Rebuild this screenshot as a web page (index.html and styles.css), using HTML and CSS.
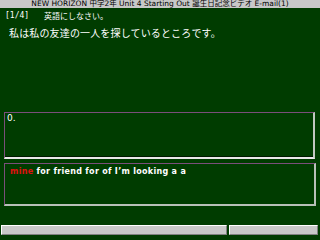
FILE: index.html
```html
<!DOCTYPE html>
<html lang="ja">
<head>
<meta charset="utf-8">
<link rel="stylesheet" href="styles.css">
</head>
<body>
<div class="screen">
  <div class="title">NEW HORIZON 中学2年 Unit 4 Starting Out 誕生日記念ビデオ E-mail(1)</div>
  <div class="prompt"><span class="count">[1/4]</span><span class="instr">英語にしなさい。</span></div>
  <div class="sentence">私は私の友達の一人を探しているところです。</div>
  <div class="answer">0.</div>
  <div class="words"><span class="hl">mine</span> for friend for of I’m looking a a</div>
  <div class="status">
    <div class="panel p1"></div>
    <div class="panel p2"></div>
  </div>
</div>
</body>
</html>
```
FILE: styles.css
```css
html, body {
  margin: 0;
  padding: 0;
}
body {
  width: 320px;
  height: 240px;
  background: #003c00;
  overflow: hidden;
  font-family: "Noto Sans CJK JP", "DejaVu Sans", sans-serif;
  color: #ffffff;
}
.screen {
  display: flex;
  flex-direction: column;
  height: 240px;
}
.title {
  height: 8px;
  line-height: 8px;
  background: #c8c8c8;
  color: #000;
  font-size: 7.5px;
  text-align: center;
  white-space: nowrap;
  overflow: hidden;
  font-family: "DejaVu Sans", "Noto Sans CJK JP", sans-serif;
}
.prompt {
  display: flex;
  margin-top: 3px;
  height: 10px;
  line-height: 10px;
  font-size: 8px;
  padding-left: 5px;
}
.count {
  width: 39px;
  font-family: "DejaVu Sans Mono", monospace;
}
.instr {
  font-size: 8px;
}
.sentence {
  margin-top: 6px;
  padding-left: 9px;
  height: 12px;
  line-height: 12px;
  font-size: 10px;
  letter-spacing: 0.15px;
}
.answer {
  margin: 73px 0 0 4px;
  width: 306px;
  height: 44px;
  border-top: 1px solid #7a4e7a;
  border-left: 1px solid #7a4e7a;
  border-right: 2px solid #c0c8c0;
  border-bottom: 2px solid #e8e8e8;
  box-shadow: inset 0 -1px 0 #001800;
  padding: 0 0 0 2px;
  font-size: 9px;
  line-height: 10px;
  font-family: "DejaVu Sans", sans-serif;
}
.words {
  margin: 4px 0 0 4px;
  width: 304px;
  height: 37px;
  border-top: 1px solid #7a4e7a;
  border-left: 1px solid #7a4e7a;
  border-right: 2px solid #b8c0b8;
  border-bottom: 2px solid #b8c0b8;
  padding: 3px 0 0 5px;
  font-size: 8px;
  line-height: 10px;
  font-weight: bold;
  font-family: "DejaVu Sans", sans-serif;
  letter-spacing: 0.3px;
}
.hl {
  color: #e01010;
}
.status {
  margin-top: 19px;
  display: flex;
  gap: 2px;
  padding: 0 2px 0 1px;
  height: 10px;
}
.panel {
  background: #c8c8c8;
  border-top: 1px solid #ffffff;
  border-left: 1px solid #ffffff;
  border-bottom: 1px solid #808080;
  border-right: 1px solid #808080;
  box-sizing: border-box;
  height: 10px;
}
.p1 {
  width: 226px;
}
.p2 {
  flex: 1;
}
```
